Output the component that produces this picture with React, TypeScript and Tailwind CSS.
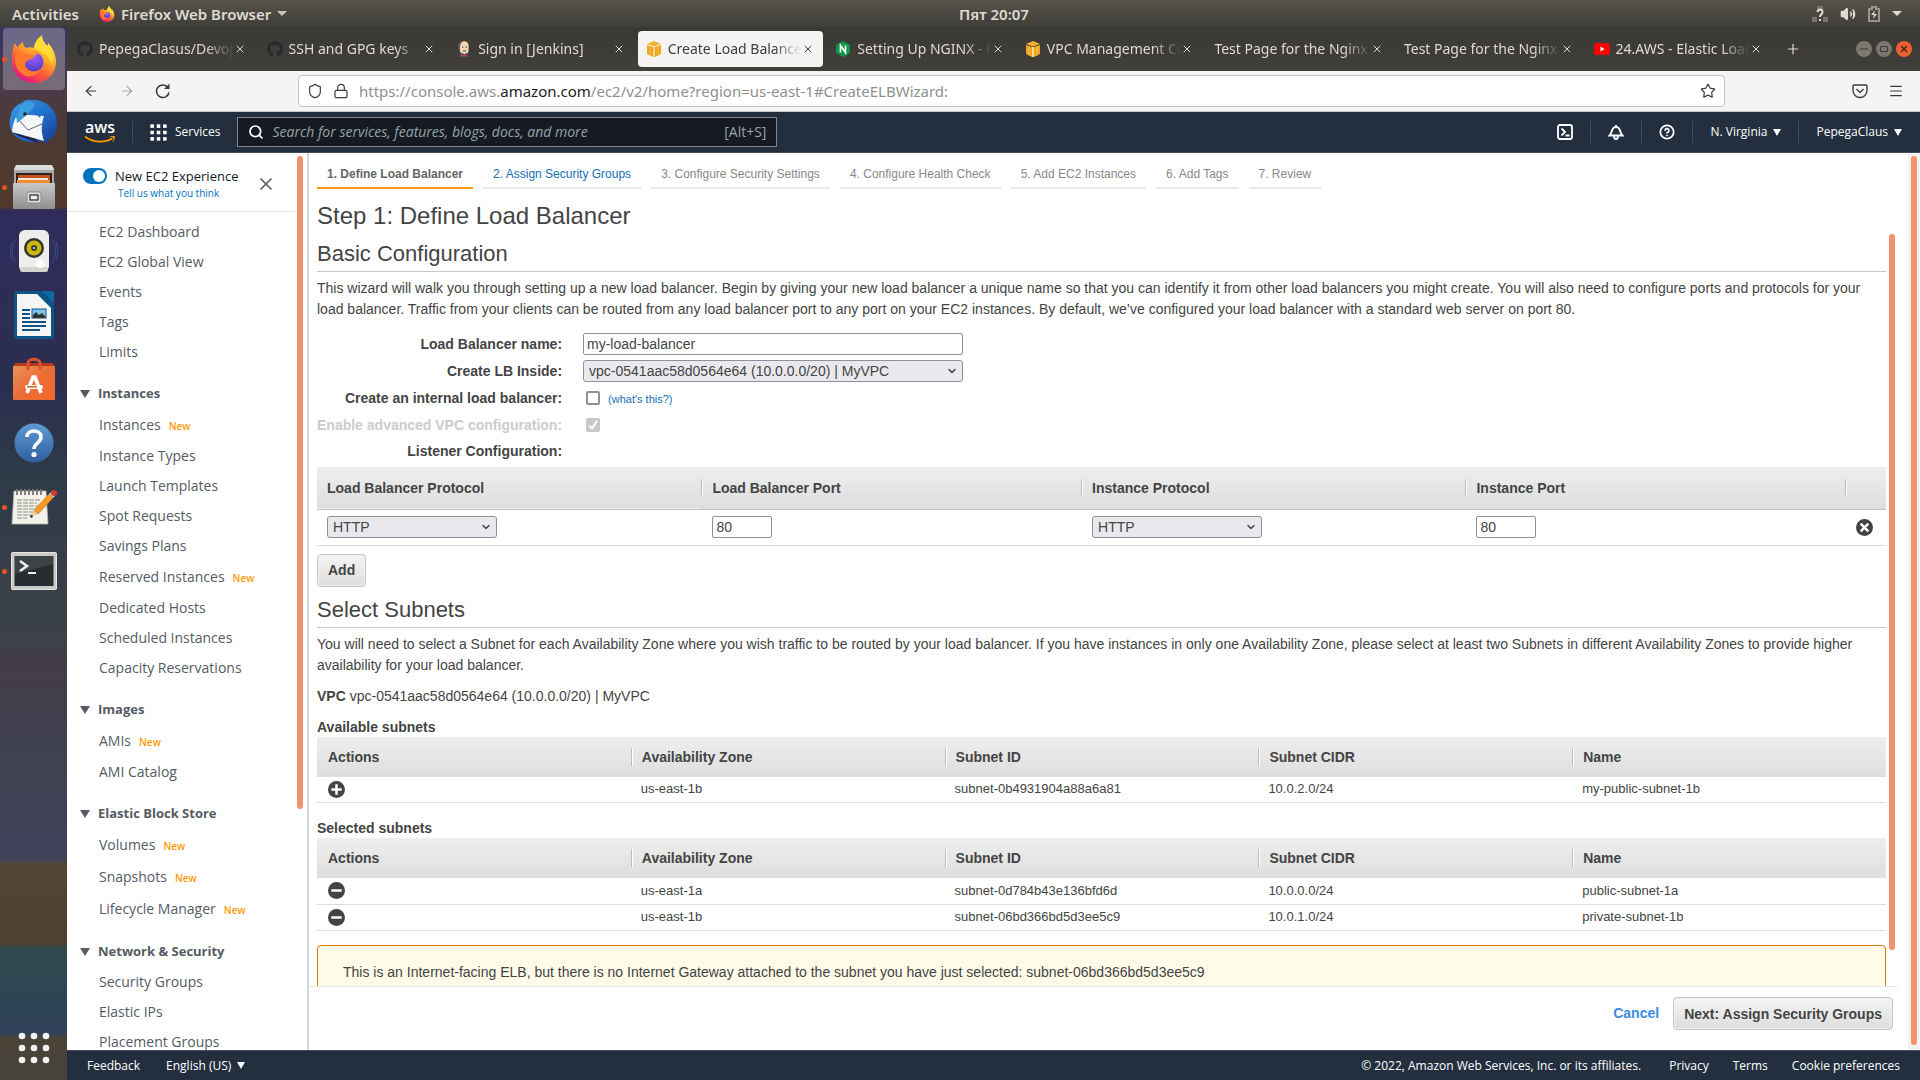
import type { ReactNode } from "react";
import {
  ArrowLeft,
  ArrowRight,
  ChevronDown,
  Lock,
  Menu,
  Plus,
  Search,
  Shield,
  Star,
  Volume2,
  X,
  CircleHelp,
} from "lucide-react";
import { FaGithub } from "react-icons/fa";

/* ---------- Dock icons ---------- */

function FirefoxIcon({ className }: { className?: string }) {
  return (
    <svg viewBox="0 0 46 48" className={className} aria-hidden="true">
      <defs>
        <linearGradient id="fxBody" x1="0.85" y1="0.1" x2="0.3" y2="1">
          <stop offset="0" stopColor="#fff04a" />
          <stop offset="0.35" stopColor="#ffb02a" />
          <stop offset="0.65" stopColor="#ff5a36" />
          <stop offset="1" stopColor="#e31587" />
        </linearGradient>
        <radialGradient id="fxGlobe" cx="0.5" cy="0.2" r="0.9">
          <stop offset="0" stopColor="#a35cff" />
          <stop offset="1" stopColor="#4a3bc0" />
        </radialGradient>
      </defs>
      <path
        d="M2 14c0-2 1-4 2-6 1 2 1 3 3 4 1-2 2-3 5-5 0 3 1 5 3 6 3-1 6-1 8 0 1-6 4-10 8-12 0 5 2 7 5 10 1-1 1-2 1-3 5 5 8 12 8 19 0 12-10 21-22 21S1 39 1 26c0-5 0-8 1-12z"
        fill="url(#fxBody)"
      />
      <path d="M23 13c1-6 4-10 8-13 0 6 3 8 6 12 4 5 6 11 4 18-2-8-7-12-12-14-2-1-4-2-6-3z" fill="#ffdd35" />
      <circle cx="23" cy="27" r="9.5" fill="url(#fxGlobe)" />
      <path d="M15 19c3-4 10-4 14-1-3 0-4 1-5 3z" fill="#ff9a2a" />
      <path
        d="M5 18c4-2 8-1 11 1 3 1 6 1 8 2-1 2-4 3-6 4-2 1-4 2-4 5 1 6 9 9 15 4-3 8-13 10-19 4C4 33 3 25 5 18z"
        fill="#ff7a2a"
      />
    </svg>
  );
}

function ThunderbirdIcon() {
  return (
    <svg viewBox="0 0 52 52" className="size-13" aria-hidden="true">
      <defs>
        <linearGradient id="tb" x1="0" y1="0" x2="1" y2="1">
          <stop offset="0" stopColor="#3aa0e4" />
          <stop offset="0.6" stopColor="#2165c4" />
          <stop offset="1" stopColor="#16357f" />
        </linearGradient>
      </defs>
      <path
        d="M3 18C4 12 9 7 14 6c2-3 6-4 9-3 12-1 22 6 25 16 3 9 0 19-6 24l1-3-6 8c0-3-1-5-2-6l-1 2C20 48 7 42 3 33c-2-5-2-10 0-15z"
        fill="url(#tb)"
      />
      <path d="M5 36l8 4 18 6-6-8z" fill="#1d2350" />
      <path d="M8 20c4-3 14-2 28-1-3 8-3 17 0 25L4 35c0-5 2-11 4-15z" fill="#f5f6f8" />
      <path d="M8 20l12 13 16-7" fill="none" stroke="#5f6874" strokeWidth="1" />
      <path d="M11 12c3-6 9-9 15-6 1 4-4 8-7 11-3 4-7 6-10 9-1-5 0-10 2-14z" fill="#3b9ee0" />
      <path d="M24 14c6-4 14-4 20 1-8-1-11 2-12 6-2-3-5-5-8-7z" fill="#1d76cf" />
      <circle cx="17" cy="17" r="1.8" fill="#26201e" />
    </svg>
  );
}

function FilesIcon() {
  return (
    <svg viewBox="0 0 44 44" className="size-11" aria-hidden="true">
      <defs>
        <linearGradient id="cab" x1="0" y1="0" x2="0" y2="1">
          <stop offset="0" stopColor="#c8c8c8" />
          <stop offset="1" stopColor="#8f8f8f" />
        </linearGradient>
      </defs>
      <path d="M4 0h36l2 4v40H2V4z" fill="#a8a8a8" />
      <path d="M4 0h36l2 5H2z" fill="#dcdcdc" />
      <rect x="4" y="8" width="36" height="12" fill="#2b2320" />
      <rect x="6" y="10" width="32" height="8" fill="#c8501c" />
      <rect x="6" y="13" width="30" height="2" fill="#f4e9dc" />
      <rect x="5" y="15" width="33" height="4" fill="#f08c34" />
      <rect x="1" y="18" width="42" height="26" rx="1" fill="url(#cab)" />
      <rect x="15" y="27" width="14" height="11" rx="2" fill="#dedede" stroke="#8a8a8a" />
      <rect x="18" y="30" width="8" height="5" fill="#eee" stroke="#333" strokeWidth="1.3" />
    </svg>
  );
}

function RhythmboxIcon() {
  return (
    <svg viewBox="0 0 48 48" className="size-12" aria-hidden="true">
      <path
        d="M6 12a22 22 0 000 24M42 12a22 22 0 010 24M2 15a26 26 0 000 18M46 15a26 26 0 010 18"
        fill="none"
        stroke="#4a6ea8"
        strokeOpacity="0.5"
      />
      <rect x="9" y="3" width="30" height="42" rx="6" fill="#ededeb" />
      <rect x="10" y="40" width="28" height="5" rx="2.5" fill="#d2d2ce" />
      <circle cx="24" cy="21" r="10" fill="#2e3434" />
      <circle cx="24" cy="21" r="7.5" fill="#d0b60a" />
      <circle cx="24" cy="21" r="3" fill="#3a3f3f" />
      <circle cx="24" cy="21" r="1" fill="#ddd" />
      <circle cx="30" cy="37" r="4" fill="#fff" />
    </svg>
  );
}

function WriterIcon() {
  return (
    <svg viewBox="0 0 40 48" className="h-12 w-10" aria-hidden="true">
      <rect width="40" height="48" rx="3" fill="#0e5487" />
      <path d="M3 3h20l14 14v28H3z" fill="#f5f5f5" />
      <path d="M28 0h9a3 3 0 013 3v9z" fill="#0a69a6" />
      <g fill="#0e5487">
        <rect x="8" y="18" width="8" height="2" />
        <rect x="8" y="22" width="8" height="2" />
        <rect x="8" y="26" width="8" height="2" />
        <rect x="8" y="30" width="24" height="2" />
        <rect x="8" y="34" width="24" height="2" />
        <rect x="8" y="38" width="18" height="2" />
      </g>
      <rect x="18" y="18" width="14" height="9" fill="#7cc4ee" stroke="#0e5487" />
      <path d="M19 27v-3l3-3 3 3 3-2 3 3v2z" fill="#333" />
    </svg>
  );
}

function SoftwareIcon() {
  return (
    <svg viewBox="0 0 42 44" className="h-11 w-[42px]" aria-hidden="true">
      <defs>
        <linearGradient id="bag" x1="0" y1="0" x2="1" y2="1">
          <stop offset="0" stopColor="#e6965a" />
          <stop offset="0.5" stopColor="#ec6c36" />
          <stop offset="1" stopColor="#ee6a2a" />
        </linearGradient>
      </defs>
      <path d="M2 6h38l2 4H0z" fill="#b5391a" />
      <rect y="9" width="42" height="34" rx="1" fill="url(#bag)" />
      <path d="M15 13V6c0-5 12-5 12 0v7" fill="none" stroke="#e0512a" strokeWidth="3" />
      <path d="M14 36l6-16h2l6 16" fill="none" stroke="#fff" strokeWidth="3.6" />
      <rect x="12" y="28" width="18" height="4" rx="2" fill="#fff" />
      <rect x="14" y="29" width="10" height="1.6" fill="#e8662f" />
    </svg>
  );
}

function HelpIcon() {
  return (
    <svg viewBox="0 0 40 40" className="size-10" aria-hidden="true">
      <defs>
        <linearGradient id="hlp" x1="0" y1="0" x2="0" y2="1">
          <stop offset="0" stopColor="#5e9bd6" />
          <stop offset="1" stopColor="#2f5f9f" />
        </linearGradient>
      </defs>
      <circle cx="20" cy="20" r="19.5" fill="url(#hlp)" />
      <path d="M13 14c0-8 14-8 14 0 0 6-7 6-7 12" fill="none" stroke="#fff" strokeWidth="3.6" />
      <circle cx="20" cy="31.5" r="2.6" fill="#fff" />
    </svg>
  );
}

function EditorIcon() {
  return (
    <svg viewBox="0 0 46 38" className="h-[38px] w-[46px]" aria-hidden="true">
      <path d="M3 3h32l2 33H1z" fill="#f2f2ea" stroke="#b8b8ae" strokeWidth="0.8" />
      <path d="M6 1v6M10 1v6M14 1v6M18 1v6M22 1v6M26 1v6M30 1v6" stroke="#77776f" strokeWidth="1.8" />
      <path
        d="M6 12h24M6 15h20M6 18h22M6 21h18M6 24h20M6 27h15M6 30h10"
        stroke="#8b8b84"
        strokeWidth="1"
        strokeDasharray="5 1"
      />
      <path d="M20 29l3-7 4 4z" fill="#e8cfa0" />
      <path d="M23 22L38 6l4 4-15 16z" fill="#f59a23" stroke="#c26e10" strokeWidth="0.6" />
      <path d="M38 6l2-2 4 4-2 2z" fill="#c9c9c9" />
      <circle cx="43" cy="5" r="3" fill="#d9383a" />
      <circle cx="20.5" cy="28.5" r="1.2" fill="#222" />
    </svg>
  );
}

function TerminalIcon() {
  return (
    <svg viewBox="0 0 46 38" className="h-[38px] w-[46px]" aria-hidden="true">
      <rect x="0.5" y="0.5" width="45" height="37" rx="1" fill="#c9cac7" stroke="#e6e6e4" />
      <rect x="3.5" y="4" width="39" height="30" fill="#272c2e" />
      <path d="M4 4h38v8L4 22z" fill="#3d4345" />
      <path d="M9 9l7 5-7 5" fill="none" stroke="#f0f0f0" strokeWidth="2.6" />
      <path d="M17 21h8" stroke="#f0f0f0" strokeWidth="2" />
    </svg>
  );
}

function GridDots({ className, round }: { className: string; round: boolean }) {
  const spots = [3, 12, 21];
  return (
    <svg viewBox="0 0 24 24" className={className} fill="currentColor" aria-hidden="true">
      {spots.map((y) =>
        spots.map((x) => (
          <rect key={`${x}-${y}`} x={x - 2.5} y={y - 2.5} width="5" height="5" rx={round ? 2.5 : 0} />
        )),
      )}
    </svg>
  );
}

const dock: { label: string; icon: ReactNode; running: boolean; active?: boolean }[] = [
  { label: "Firefox", icon: <FirefoxIcon className="h-12 w-[46px]" />, running: true, active: true },
  { label: "Thunderbird", icon: <ThunderbirdIcon />, running: false },
  { label: "Files", icon: <FilesIcon />, running: true },
  { label: "Rhythmbox", icon: <RhythmboxIcon />, running: false },
  { label: "LibreOffice Writer", icon: <WriterIcon />, running: false },
  { label: "Software", icon: <SoftwareIcon />, running: false },
  { label: "Help", icon: <HelpIcon />, running: false },
  { label: "Text Editor", icon: <EditorIcon />, running: true },
  { label: "Terminal", icon: <TerminalIcon />, running: true },
];

function Dock() {
  return (
    <nav
      aria-label="Dock"
      className="flex w-[67px] shrink-0 flex-col bg-[linear-gradient(180deg,#3a3560_0%,#4b3a48_6%,#4b3a35_9%,#503a2c_17%,#2f2c5c_17.5%,#2a2f50_34%,#2e3a48_42%,#3c4248_58%,#453c4a_60%,#3e4250_70%,#40425c_79%,#544434_79.5%,#4f3f30_87%,#2e4a4e_87.5%,#30425a_95.5%,#4a4438_96%,#46423a_100%)]"
    >
      {dock.map((d) => (
        <button key={d.label} aria-label={d.label} className="relative flex h-16 items-center justify-center">
          {d.running && <span className="absolute left-0.5 size-[5px] rounded-full bg-[#e95420]" />}
          <span
            className={
              d.active
                ? "flex h-[62px] w-[62px] items-center justify-center rounded bg-white/25"
                : "flex h-[62px] w-[62px] items-center justify-center"
            }
          >
            {d.icon}
          </span>
        </button>
      ))}
      <button aria-label="Show Applications" className="mt-auto mb-4 flex items-center justify-center text-[#f2f2f2]">
        <GridDots className="size-8" round />
      </button>
    </nav>
  );
}

/* ---------- Desktop top bar ---------- */

function TopBar() {
  return (
    <header className="relative flex h-[27px] shrink-0 items-center justify-between bg-linear-to-b from-[#57534a] to-[#3f3e39] px-3 text-[15px] leading-5 font-semibold text-[#dfdbd2]">
      <div className="flex items-center gap-5">
        <button>Activities</button>
        <button className="flex items-center gap-1.5">
          <FirefoxIcon className="size-4" />
          Firefox Web Browser
          <Triangle className="h-[5px] w-2.5 text-[#c9c5bc]" />
        </button>
      </div>
      <time className="absolute inset-x-0 mx-auto w-max pl-17">Пят 20:07</time>
      <div className="flex items-center gap-3 pr-1.5">
        <svg viewBox="0 0 16 16" className="size-4" aria-hidden="true">
          <path d="M0 11h5v5H0zM11 11h5v5h-5zM5 0h6v3H5z" fill="#77746c" />
          <path
            d="M5.5 6c0-3.500 5-3.500 5 0 0 2.500-2.500 2.500-2.500 5M8 13v2"
            fill="none"
            stroke="#dfdbd2"
            strokeWidth="2"
          />
        </svg>
        <Volume2 className="size-4 fill-current" />
        <svg viewBox="0 0 12 16" className="h-4 w-3" aria-hidden="true">
          <path d="M4 1h4v2h3v12H1V3h3z" fill="none" stroke="#98958c" strokeWidth="2" />
          <path d="M7 4L3 9h3l-1 4 4-5H6z" fill="#dfdbd2" />
        </svg>
        <Triangle className="h-[5px] w-2.5" />
      </div>
    </header>
  );
}

function Triangle({ className }: { className: string }) {
  return (
    <svg viewBox="0 0 10 8" preserveAspectRatio="none" className={className} fill="currentColor" aria-hidden="true">
      <path d="M0 0h10L5 8z" />
    </svg>
  );
}

/* ---------- Browser chrome ---------- */

function CubeIcon() {
  return (
    <svg viewBox="0 0 16 16" className="size-4 shrink-0" aria-hidden="true">
      <path d="M1 4l6 2v10l-6-3z" fill="#f0a51e" />
      <path d="M15 4L9 6v10l6-3z" fill="#f0a51e" />
      <path d="M7 6h2v10H7z" fill="#f9d797" />
      <path d="M1 3l7-3 7 3-7 2.5z" fill="#f5b32e" />
      <path d="M4 5v9.500M12 5v9.500" stroke="#f7c566" strokeWidth="0.8" />
    </svg>
  );
}

function JenkinsIcon() {
  return (
    <svg viewBox="0 0 16 16" className="size-4 shrink-0" aria-hidden="true">
      <path d="M3 6c0-8 10-8 10-1v4c0 3-2 5-5 5S3 11 3 6z" fill="#f0d6b7" stroke="#3a2c22" strokeWidth="0.7" />
      <path d="M2 8c0-5 1-7 4-7-2 2-2 4-2 8z" fill="#6b5a50" />
      <path d="M3 13l4-1 1 2 2-2 3 1 1 3H2z" fill="#2d4a63" />
      <path d="M5 13l3 1 3-1v3L8 15l-3 1z" fill="#d33833" />
      <path d="M6 6h1.500M9.500 6H11M7 10h3" stroke="#3a2c22" strokeWidth="0.9" />
    </svg>
  );
}

function NginxIcon() {
  return (
    <svg viewBox="0 0 16 16" className="size-4 shrink-0" aria-hidden="true">
      <path d="M8 0l7 4v8l-7 4-7-4V4z" fill="#0f9648" />
      <path d="M5.500 11.500v-7l5 7v-7" fill="none" stroke="#fff" strokeWidth="1.7" />
    </svg>
  );
}

function YoutubeIcon() {
  return (
    <svg viewBox="0 0 16 12" className="h-3 w-4 shrink-0" aria-hidden="true">
      <rect width="16" height="12" rx="3" fill="#f00" />
      <path d="M6.500 3.500l4 2.500-4 2.500z" fill="#fff" />
    </svg>
  );
}

const tabs: { title: string; icon?: ReactNode; active?: boolean }[] = [
  { title: "PepegaClasus/Devops", icon: <FaGithub className="size-4 shrink-0 text-[#24292e]" /> },
  { title: "SSH and GPG keys", icon: <FaGithub className="size-4 shrink-0 text-[#24292e]" /> },
  { title: "Sign in [Jenkins]", icon: <JenkinsIcon /> },
  { title: "Create Load Balancer", icon: <CubeIcon />, active: true },
  { title: "Setting Up NGINX - N", icon: <NginxIcon /> },
  { title: "VPC Management Co", icon: <CubeIcon /> },
  { title: "Test Page for the Nginx" },
  { title: "Test Page for the Nginx" },
  { title: "24.AWS - Elastic Load", icon: <YoutubeIcon /> },
];

function TabBar() {
  return (
    <div className="flex h-11 shrink-0 items-center bg-linear-to-b from-[#3a3935] to-[#403f3a] text-sm text-[#dfdbd2]">
      <div className="flex max-w-[1706px] min-w-0 flex-1 items-center">
        {tabs.map((t, i) => (
          <div key={i} className="flex min-w-0 flex-1 px-0.5">
            <div
              className={
                t.active
                  ? "flex h-9 min-w-0 flex-1 items-center rounded bg-[#f5f4f2] px-2 text-[#3d3d3d]"
                  : "flex h-9 min-w-0 flex-1 items-center rounded px-2"
              }
            >
              <a
                href="#tab"
                className="flex min-w-0 flex-1 items-center gap-1.5 overflow-hidden whitespace-nowrap [mask-image:linear-gradient(to_right,#000_82%,transparent)]"
              >
                {t.icon}
                {t.title}
              </a>
              <button aria-label={`Close ${t.title}`} className="pr-px">
                <X className="size-3" strokeWidth={2} />
              </button>
            </div>
          </div>
        ))}
      </div>
      <button aria-label="New tab" className="ml-3">
        <Plus className="size-4" strokeWidth={1.8} />
      </button>
      <div className="ml-auto flex gap-1 pr-2">
        <button
          aria-label="Minimize"
          className="flex size-4 items-center justify-center rounded-full bg-[#7a776e] text-[#3c3b37]"
        >
          <svg viewBox="0 0 10 10" className="size-2.5" stroke="currentColor" aria-hidden="true">
            <path d="M1 5h8" />
          </svg>
        </button>
        <button
          aria-label="Maximize"
          className="flex size-4 items-center justify-center rounded-full bg-[#7a776e] text-[#3c3b37]"
        >
          <svg viewBox="0 0 10 10" className="size-2.5" fill="none" stroke="currentColor" aria-hidden="true">
            <path d="M1.500 2.500h7v5h-7z" />
          </svg>
        </button>
        <button
          aria-label="Close"
          className="flex size-4 items-center justify-center rounded-full bg-[#ec5f32] text-[#3c2117]"
        >
          <X className="size-2.5" strokeWidth={3} />
        </button>
      </div>
    </div>
  );
}

function Toolbar() {
  return (
    <div className="flex h-[41px] shrink-0 items-center border-b border-[#c9c8c6] bg-[#f5f4f2] text-[#3d3d3d]">
      <div className="flex w-[231px] shrink-0 items-center gap-5 pl-4">
        <button aria-label="Back">
          <ArrowLeft className="size-4" strokeWidth={1.8} />
        </button>
        <button aria-label="Forward" className="text-[#a9a8a6]">
          <ArrowRight className="size-4" strokeWidth={1.8} />
        </button>
        <button aria-label="Reload">
          <svg
            viewBox="0 0 16 16"
            className="size-4"
            fill="none"
            stroke="currentColor"
            strokeWidth="1.5"
            aria-hidden="true"
          >
            <path d="M14 9.500A6.300 6.300 0 1112.500 4" />
            <path d="M14.500 0.500v5.500H9z" fill="currentColor" stroke="none" />
          </svg>
        </button>
      </div>
      <div className="flex h-8 max-w-[1427px] flex-1 items-center gap-2.5 rounded border border-[#c3c2c0] bg-white px-2">
        <Shield className="size-4" strokeWidth={1.8} />
        <Lock className="size-4" strokeWidth={1.8} />
        <a href="#url" className="flex-1 text-[15px] whitespace-nowrap text-[#8f8f8f]">
          https://console.aws.<span className="text-[#222]">amazon.com</span>
          /ec2/v2/home?region=us-east-1#CreateELBWizard:
        </a>
        <button aria-label="Bookmark this page">
          <Star className="size-4" strokeWidth={1.8} />
        </button>
      </div>
      <div className="ml-auto flex items-center gap-5 pr-4">
        <button aria-label="Save to Pocket">
          <svg
            viewBox="0 0 16 16"
            className="size-4"
            fill="none"
            stroke="currentColor"
            strokeWidth="1.4"
            aria-hidden="true"
          >
            <path d="M1 3a1 1 0 011-1h12a1 1 0 011 1v4.500a7 7 0 01-14 0z" />
            <path d="M4.500 6L8 9.500 11.500 6" />
          </svg>
        </button>
        <button aria-label="Open menu">
          <Menu className="size-4" strokeWidth={1.8} />
        </button>
      </div>
    </div>
  );
}

/* ---------- AWS console ---------- */

function NavDivider() {
  return <span className="h-[22px] w-px bg-[#414b5a]" />;
}

function ConsoleNav() {
  return (
    <header className="flex h-[41px] shrink-0 items-center border-b border-[#454f5c] bg-[#232f3e] font-['Open_Sans',sans-serif] text-xs text-white">
      <a href="#aws" aria-label="AWS home" className="flex flex-col items-center pl-[17px] leading-none">
        <span className="h-[15px] text-base leading-[12px] font-semibold">aws</span>
        <svg viewBox="0 0 32 8" className="h-2 w-8" aria-hidden="true">
          <path d="M1 0.500c8 6.500 20 6.500 27 2" fill="none" stroke="#f90" strokeWidth="1.8" />
          <path d="M25 0.800c3-1 6-1 6 0s-1 4-2.500 5.500c0.500-2 1-4 0.500-4.500s-2-0.600-4-1z" fill="#f90" />
        </svg>
      </a>
      <span className="ml-4 h-[22px] w-px bg-[#414b5a]" />
      <button className="ml-[17px] flex items-center gap-2">
        <GridDots className="size-[17px]" round={false} />
        Services
      </button>
      <label className="ml-[17px] flex h-[30px] w-[540px] shrink items-center gap-2 border border-[#7f8b8b] bg-[#161a22] px-2.5">
        <Search className="size-4" strokeWidth={2.6} />
        <input
          type="search"
          aria-label="Search"
          placeholder="Search for services, features, blogs, docs, and more"
          className="min-w-0 flex-1 bg-transparent text-sm italic outline-none placeholder:text-[#95a5a6]"
        />
        <span className="text-sm text-[#95a5a6]">[Alt+S]</span>
      </label>
      <div className="ml-auto flex items-center gap-[17px] pr-[18px]">
        <button aria-label="CloudShell">
          <svg
            viewBox="0 0 16 16"
            className="size-4"
            fill="none"
            stroke="currentColor"
            strokeWidth="1.8"
            aria-hidden="true"
          >
            <rect x="1" y="1" width="14" height="14" rx="2" />
            <path d="M4.500 4.500L8 8l-3.500 3.500M8.500 11.500h4" />
          </svg>
        </button>
        <NavDivider />
        <button aria-label="Notifications">
          <svg
            viewBox="0 0 16 16"
            className="size-4"
            fill="none"
            stroke="currentColor"
            strokeWidth="1.8"
            aria-hidden="true"
          >
            <path d="M8 1v2M8 3c-5 0-3 5-6.500 8.500h13C11 8 13 3 8 3zM6 12c0 4 4 4 4 0" />
          </svg>
        </button>
        <NavDivider />
        <button aria-label="Help">
          <CircleHelp className="size-4" strokeWidth={2.6} />
        </button>
        <NavDivider />
        <button className="flex items-center gap-1.5">
          N. Virginia <Triangle className="h-[7px] w-2" />
        </button>
        <NavDivider />
        <button className="flex items-center gap-1.5">
          PepegaClaus <Triangle className="h-[7px] w-2" />
        </button>
      </div>
    </header>
  );
}

const sections: { title?: string; items: { label: string; fresh?: boolean }[] }[] = [
  {
    items: [
      { label: "EC2 Dashboard" },
      { label: "EC2 Global View" },
      { label: "Events" },
      { label: "Tags" },
      { label: "Limits" },
    ],
  },
  {
    title: "Instances",
    items: [
      { label: "Instances", fresh: true },
      { label: "Instance Types" },
      { label: "Launch Templates" },
      { label: "Spot Requests" },
      { label: "Savings Plans" },
      { label: "Reserved Instances", fresh: true },
      { label: "Dedicated Hosts" },
      { label: "Scheduled Instances" },
      { label: "Capacity Reservations" },
    ],
  },
  { title: "Images", items: [{ label: "AMIs", fresh: true }, { label: "AMI Catalog" }] },
  {
    title: "Elastic Block Store",
    items: [
      { label: "Volumes", fresh: true },
      { label: "Snapshots", fresh: true },
      { label: "Lifecycle Manager", fresh: true },
    ],
  },
  {
    title: "Network & Security",
    items: [{ label: "Security Groups" }, { label: "Elastic IPs" }, { label: "Placement Groups" }],
  },
];

function Sidebar() {
  return (
    <aside className="flex w-[242px] shrink-0 border-r-2 border-[#d5d8d9] font-['Open_Sans',sans-serif] text-sm text-[#545b64]">
      <div className="flex min-w-0 flex-1 flex-col overflow-hidden">
        <div className="flex h-[59px] shrink-0 items-start border-b border-[#e4e7e7] pt-3.5 pl-4">
          <label className="mt-px flex cursor-pointer">
            <input
              type="checkbox"
              role="switch"
              defaultChecked
              aria-label="New EC2 Experience"
              className="peer sr-only"
            />
            <span className="flex h-4 w-6 items-center justify-end rounded-full bg-[#0073bb] p-0.5">
              <span className="size-3 rounded-full bg-white" />
            </span>
          </label>
          <div className="ml-2 w-[128px]">
            <p className="text-[13px] leading-[18px] font-medium whitespace-nowrap text-[#16191f]">
              New EC2 Experience
            </p>
            <a href="#feedback" className="block pl-[3px] text-[10px] leading-4 text-[#0073bb]">
              Tell us what you think
            </a>
          </div>
          <button aria-label="Close panel" className="mt-[7px] ml-[13px] text-[#545b64]">
            <X className="size-5" strokeWidth={2} />
          </button>
        </div>
        <nav aria-label="EC2" className="pt-[5px]">
          {sections.map((s, i) => (
            <section key={i}>
              {s.title && (
                <h2 className="mt-[11px] flex h-[31px] items-center gap-2 pl-[13px] text-[13px] font-bold">
                  <Triangle className="h-2 w-2.5" />
                  {s.title}
                </h2>
              )}
              <ul>
                {s.items.map((item) => (
                  <li
                    key={item.label}
                    className={item.fresh ? "flex h-8 items-center pl-8" : "flex h-[30px] items-center pl-8"}
                  >
                    <a href="#nav">{item.label}</a>
                    {item.fresh && <span className="pt-0.5 pl-2 text-[10px] font-semibold text-[#f90]">New</span>}
                  </li>
                ))}
              </ul>
            </section>
          ))}
        </nav>
      </div>
      <div className="flex w-3 shrink-0 flex-col pt-[3px] pl-0.5">
        <div className="h-[73%] w-1.5 rounded-full bg-[#f4926c]" />
      </div>
    </aside>
  );
}

const steps = [
  "1. Define Load Balancer",
  "2. Assign Security Groups",
  "3. Configure Security Settings",
  "4. Configure Health Check",
  "5. Add EC2 Instances",
  "6. Add Tags",
  "7. Review",
];

function stepClass(i: number) {
  if (i === 0) return "border-b-2 border-[#ff9914] px-2.5 pb-1 font-bold text-[#666]";
  if (i === 1) return "border-b-2 border-[#eaeaea] px-2.5 pb-1 text-[#146eb4]";
  return "border-b-2 border-[#eaeaea] px-2.5 pb-1 text-[#888]";
}

function SectionTitle({ children }: { children: ReactNode }) {
  return <h2 className="h-[33px] border-b border-[#c8c8c8] text-[22px] leading-[30px]">{children}</h2>;
}

function SelectBox({ id, label, value, className }: { id: string; label?: string; value: string; className: string }) {
  return (
    <span className={`relative inline-flex items-center ${className}`}>
      <select
        id={id}
        aria-label={label}
        className="h-[22px] w-full appearance-none rounded-[3px] border border-[#8f8f9d] bg-[#e9e9ed] pl-[5px] text-sm leading-5"
      >
        <option>{value}</option>
      </select>
      <ChevronDown className="pointer-events-none absolute right-[5px] size-3" strokeWidth={3} />
    </span>
  );
}

function RoundIcon({ path }: { path: string }) {
  return (
    <svg viewBox="0 0 18 18" className="size-[17px]" aria-hidden="true">
      <circle cx="9" cy="9" r="9" fill="#444" />
      <path d={path} stroke="#fff" strokeWidth="2.6" />
    </svg>
  );
}

const PLUS = "M3.500 9h11M9 3.500v11";
const MINUS = "M3.500 9h11";
const CROSS = "M5 5l8 8M13 5l-8 8";

function Heading({ children, first, pad }: { children?: ReactNode; first?: boolean; pad?: string }) {
  return (
    <th scope="col" className="p-0 text-left font-bold">
      <div
        className={
          first
            ? `flex h-[18px] items-center ${pad ?? "pl-2.5"}`
            : "flex h-[18px] items-center border-l border-[#bbb] pl-2.5 shadow-[inset_1px_0_0_#fff]"
        }
      >
        {children}
      </div>
    </th>
  );
}

const portInput = "h-[22px] w-[60px] rounded-[2px] border border-[#8f8f9d] px-[3px] align-middle";

function ListenerTable() {
  return (
    <table className="mt-0.5 w-full table-fixed border-collapse">
      <colgroup>
        <col className="w-[24.5%]" />
        <col className="w-[24.2%]" />
        <col className="w-[24.5%]" />
        <col className="w-[24.2%]" />
        <col />
      </colgroup>
      <thead>
        <tr className="h-[42px] border-b border-[#c4c4c4] bg-linear-to-b from-[#eeeeee] to-[#dedede]">
          <Heading first>Load Balancer Protocol</Heading>
          <Heading>Load Balancer Port</Heading>
          <Heading>Instance Protocol</Heading>
          <Heading>Instance Port</Heading>
          <Heading>
            <span className="sr-only">Remove</span>
          </Heading>
        </tr>
      </thead>
      <tbody>
        <tr className="h-9 border-b border-[#ddd]">
          <td className="py-0 pl-2.5">
            <SelectBox
              id="lb-protocol"
              label="Load Balancer Protocol"
              value="HTTP"
              className="w-[170px] align-middle"
            />
          </td>
          <td className="py-0 pl-[11px]">
            <input aria-label="Load Balancer Port" defaultValue="80" className={portInput} />
          </td>
          <td className="py-0 pl-[11px]">
            <SelectBox
              id="inst-protocol"
              label="Instance Protocol"
              value="HTTP"
              className="w-[170px] align-middle"
            />
          </td>
          <td className="py-0 pl-[11px]">
            <input aria-label="Instance Port" defaultValue="80" className={portInput} />
          </td>
          <td className="py-0 pl-[11px]">
            <button aria-label="Remove listener" className="flex">
              <RoundIcon path={CROSS} />
            </button>
          </td>
        </tr>
      </tbody>
    </table>
  );
}

function SubnetTable({ rows, icon, action }: { rows: string[][]; icon: string; action: string }) {
  return (
    <table className="w-full table-fixed border-collapse">
      <thead>
        <tr className="h-10 bg-linear-to-b from-[#eeeeee] to-[#dedede]">
          {["Actions", "Availability Zone", "Subnet ID", "Subnet CIDR", "Name"].map((h, i) => (
            <Heading key={h} first={i === 0} pad="pl-[11px]">
              {h}
            </Heading>
          ))}
        </tr>
      </thead>
      <tbody className="text-[13px] leading-[18px]">
        {rows.map((r) => (
          <tr key={r[1]} className="h-[26px] border-b border-[#ddd]">
            <td className="py-0 pl-[11px]">
              <button aria-label={`${action} ${r[1]}`} className="flex">
                <RoundIcon path={icon} />
              </button>
            </td>
            {r.map((c) => (
              <td key={c} className="py-0 pl-2.5">
                {c}
              </td>
            ))}
          </tr>
        ))}
      </tbody>
    </table>
  );
}

const greyButton =
  "h-[33px] rounded border border-[#c4c4c4] bg-linear-to-b from-[#f5f5f5] to-[#dddddd] px-2.5 font-bold text-[#444] shadow-[inset_0_0_0_1px_#f2f2f2]";

function Wizard() {
  return (
    <main className="flex min-w-0 flex-1 flex-col font-['Liberation_Sans',Arial,sans-serif] text-sm text-[#444]">
      <ol className="flex shrink-0 gap-2.5 pt-3 pl-2 text-xs leading-[18px]">
        {steps.map((s, i) => (
          <li key={s} className={stepClass(i)}>
            {i === 1 ? <a href="#step2">{s}</a> : s}
          </li>
        ))}
      </ol>
      <h1 className="shrink-0 pt-[11px] pl-2 text-2xl leading-8">Step 1: Define Load Balancer</h1>
      <div className="flex min-h-0 flex-1 pl-2">
        <div className="min-w-0 flex-1 overflow-hidden pt-[7px]">
          <SectionTitle>Basic Configuration</SectionTitle>
          <p className="mt-1.5 leading-[21px]">
            This wizard will walk you through setting up a new load balancer. Begin by giving your new load balancer a
            unique name so that you can identify it from other load balancers you might create. You will also need to
            configure ports and protocols for your load balancer. Traffic from your clients can be routed from any load
            balancer port to any port on your EC2 instances. By default, we’ve configured your load balancer with a
            standard web server on port 80.
          </p>
          <form className="mt-2.5 grid auto-rows-[27px] grid-cols-[max-content_1fr] items-center gap-x-[21px]">
            <label htmlFor="lb-name" className="text-right font-bold">
              Load Balancer name:
            </label>
            <input
              id="lb-name"
              defaultValue="my-load-balancer"
              className="h-[22px] w-[380px] rounded-[2px] border border-[#8f8f9d] px-[3px]"
            />
            <label htmlFor="lb-vpc" className="text-right font-bold">
              Create LB Inside:
            </label>
            <SelectBox id="lb-vpc" value="vpc-0541aac58d0564e64 (10.0.0.0/20) | MyVPC" className="w-[380px]" />
            <label htmlFor="lb-internal" className="text-right font-bold">
              Create an internal load balancer:
            </label>
            <div className="flex items-center gap-2 pl-[3px]">
              <input
                id="lb-internal"
                type="checkbox"
                className="size-3.5 appearance-none rounded-[2px] border-2 border-[#8f8f9d] bg-white"
              />
              <a href="#whats-this" className="pt-0.5 text-[11px] leading-4 text-[#146eb4]">
                (what's this?)
              </a>
            </div>
            <label htmlFor="lb-advanced" className="text-right font-bold text-[#ccc]">
              Enable advanced VPC configuration:
            </label>
            <div className="relative flex items-center pl-[3px]">
              <input
                id="lb-advanced"
                type="checkbox"
                defaultChecked
                disabled
                className="size-3.5 appearance-none rounded-[2px] bg-[#c7c7ce]"
              />
              <svg viewBox="0 0 14 14" className="pointer-events-none absolute size-3.5" aria-hidden="true">
                <path d="M3 7.500l3 3 5-7.500" fill="none" stroke="#fff" strokeWidth="2" />
              </svg>
            </div>
            <span className="text-right leading-[25px] font-bold">Listener Configuration:</span>
          </form>
          <ListenerTable />
          <button className={`mt-2 ${greyButton}`}>Add</button>
          <div className="mt-2">
            <SectionTitle>Select Subnets</SectionTitle>
          </div>
          <p className="mt-1.5 leading-[21px]">
            You will need to select a Subnet for each Availability Zone where you wish traffic to be routed by your load
            balancer. If you have instances in only one Availability Zone, please select at least two Subnets in
            different Availability Zones to provide higher availability for your load balancer.
          </p>
          <p className="mt-2.5 leading-[21px]">
            <b>VPC</b> vpc-0541aac58d0564e64 (10.0.0.0/20) | MyVPC
          </p>
          <h3 className="mt-2.5 leading-5 font-bold">Available subnets</h3>
          <SubnetTable
            rows={[["us-east-1b", "subnet-0b4931904a88a6a81", "10.0.2.0/24", "my-public-subnet-1b"]]}
            icon={PLUS}
            action="Add"
          />
          <h3 className="mt-[15px] leading-5 font-bold">Selected subnets</h3>
          <SubnetTable
            rows={[
              ["us-east-1a", "subnet-0d784b43e136bfd6d", "10.0.0.0/24", "public-subnet-1a"],
              ["us-east-1b", "subnet-06bd366bd5d3ee5c9", "10.0.1.0/24", "private-subnet-1b"],
            ]}
            icon={MINUS}
            action="Remove"
          />
          <div
            role="alert"
            className="mt-3.5 rounded border border-[#d97b00] bg-[#fffbe9] px-[25px] py-4 leading-[21px]"
          >
            This is an Internet-facing ELB, but there is no Internet Gateway attached to the subnet you have just
            selected: subnet-06bd366bd5d3ee5c9
          </div>
        </div>
        <div className="w-[22px] shrink-0 pl-[3px]">
          <div className="mt-0.5 h-[95%] w-1.5 rounded-full bg-[#f4926c]" />
        </div>
      </div>
      <div className="mr-2.5 flex h-16 shrink-0 items-start justify-end gap-3.5 border-t border-[#e8e8e8] pt-2.5 pr-[5px] pl-2">
        <a href="#cancel" className="leading-[33px] font-bold text-[#3b8be0]">
          Cancel
        </a>
        <button className={greyButton}>Next: Assign Security Groups</button>
      </div>
    </main>
  );
}

function ConsoleFooter() {
  return (
    <footer className="flex h-[30px] shrink-0 items-center justify-between border-t border-[#454f5c] bg-[#232f3e] pr-5 pl-5 font-['Open_Sans',sans-serif] text-xs text-white">
      <div className="flex items-center gap-[26px]">
        <a href="#feedback">Feedback</a>
        <button className="flex items-center gap-1.5">
          English (US) <Triangle className="h-[7px] w-2" />
        </button>
      </div>
      <div className="flex items-center gap-6">
        <span className="pr-1">© 2022, Amazon Web Services, Inc. or its affiliates.</span>
        <a href="#privacy">Privacy</a>
        <a href="#terms">Terms</a>
        <a href="#cookies">Cookie preferences</a>
      </div>
    </footer>
  );
}

export default function App() {
  return (
    <div className="flex h-screen flex-col overflow-hidden bg-white font-['Noto_Sans',sans-serif]">
      <TopBar />
      <div className="flex min-h-0 flex-1">
        <Dock />
        <div className="flex min-w-0 flex-1 flex-col">
          <TabBar />
          <Toolbar />
          <ConsoleNav />
          <div className="flex min-h-0 flex-1">
            <Sidebar />
            <Wizard />
            <div className="flex w-3 shrink-0 justify-center bg-[#f2f3f3] py-[3px]">
              <div className="mb-0.5 w-1.5 rounded-full bg-[#f4926c]" />
            </div>
          </div>
          <ConsoleFooter />
        </div>
      </div>
    </div>
  );
}
